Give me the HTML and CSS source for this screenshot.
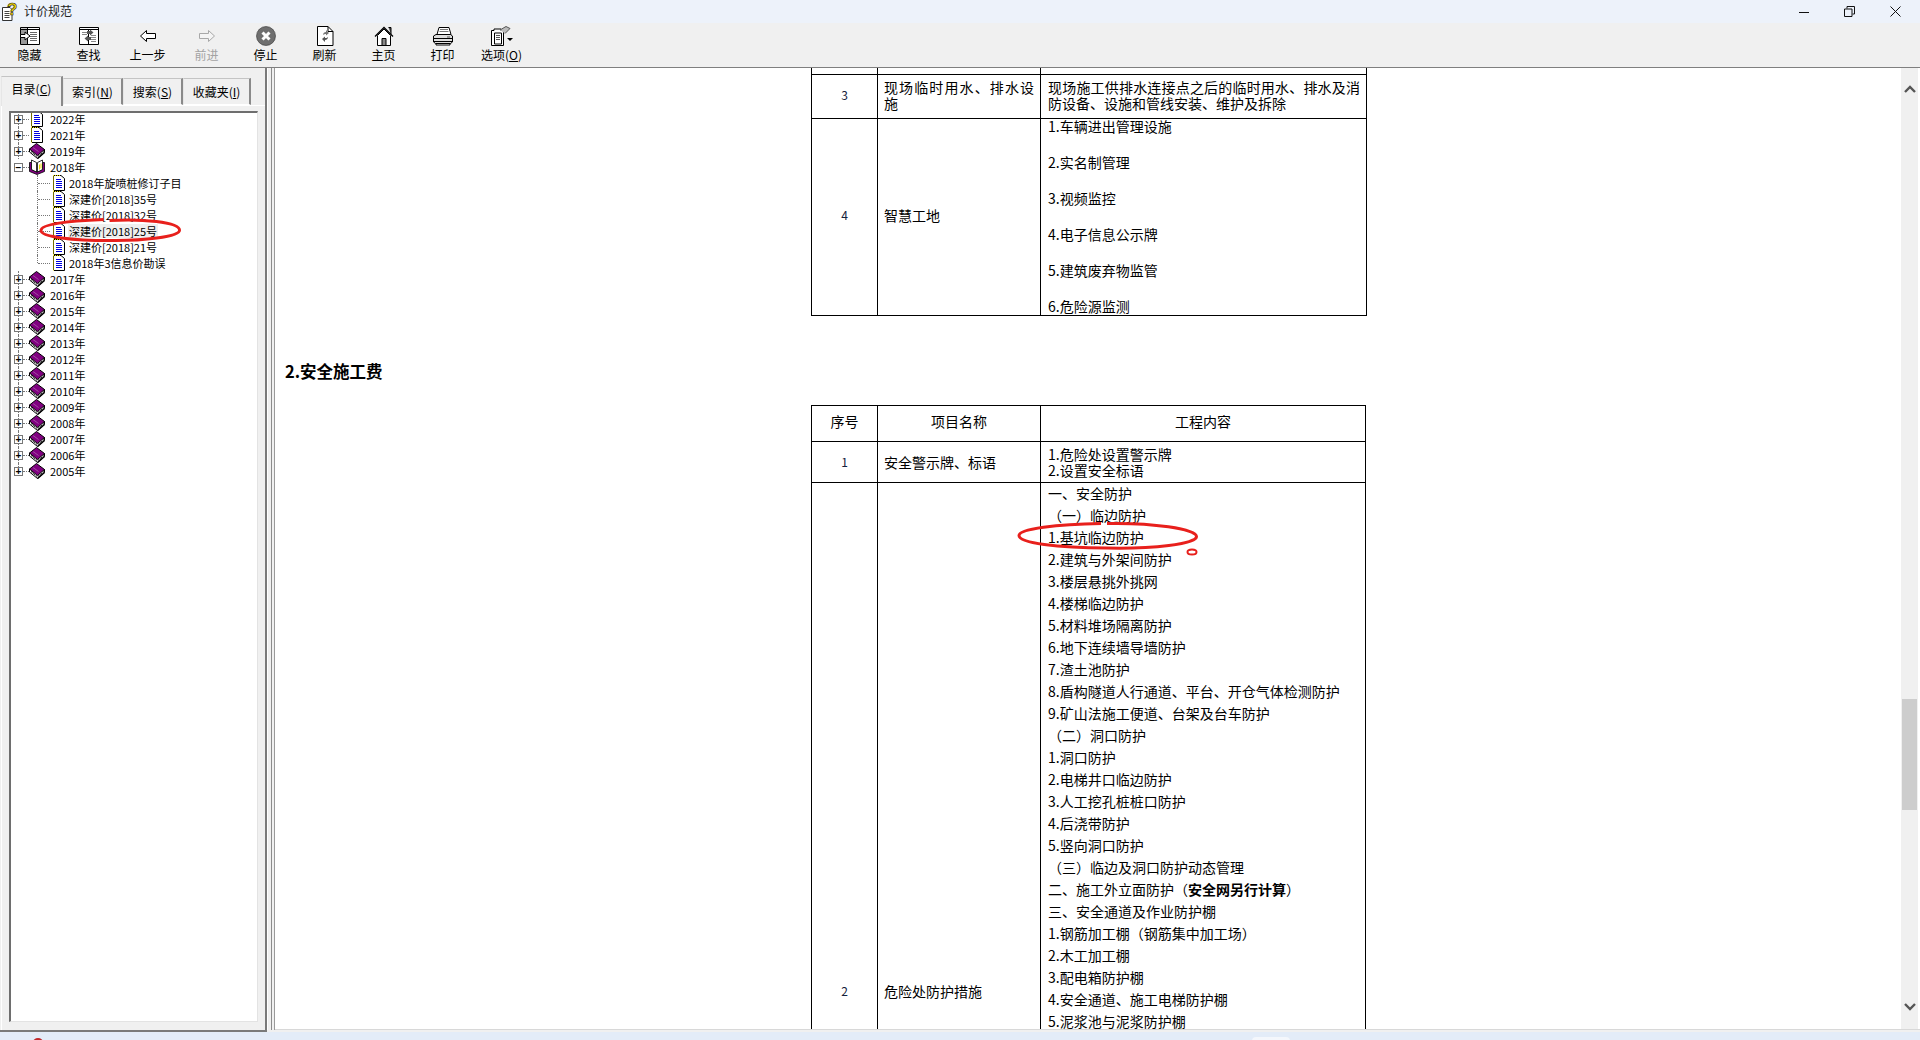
FILE: index.html
```
<!DOCTYPE html>
<html lang="zh-CN">
<head>
<meta charset="utf-8">
<title>计价规范</title>
<link rel="stylesheet" href="styles.css">
</head>
<body>
<svg class="defs" width="0" height="0">
  <symbol id="doc" viewBox="0 0 16 16">
    <path d="M2.500.5H10l3.500 3V15.500H2.500Z" fill="#fff"/>
    <path d="M2.500 15.500V.5H10" fill="none" stroke="#e8d800" stroke-width="1"/>
    <path d="M2.500 1.500V15M3 .5H10" fill="none" stroke="#000" stroke-width="1" stroke-dasharray="1 1"/>
    <path d="M10 .5l3.500 3V15.500H3" fill="none" stroke="#000"/>
    <path d="M5 4.500h5M5 6.500h6M5 8.500h6M5 10.500h6M5 12.500h6" stroke="#0000e0" stroke-width="1"/>
  </symbol>
  <symbol id="book" viewBox="0 0 16 16">
    <path d="M.5 6V9L8.500 15.500 15.500 9.500V6.500Z" fill="#fff" stroke="#000"/>
    <path d="M.5 6 7.500.5l8 6-7 6Z" fill="#800080" stroke="#000"/>
    <path d="M4 4.500 9.500 8.500" stroke="#b070b0" stroke-width=".7" fill="none"/>
    <path d="M2 8.500 8.500 13.800 15 8.500" fill="none" stroke="#000" stroke-width="1" stroke-dasharray="2 1"/>
    <path d="M8.500 15.500 15.500 9.500" stroke="#000" stroke-width="1.500" fill="none"/>
  </symbol>
  <symbol id="bookopen" viewBox="0 0 16 16">
    <path d="M.5 3.500v9l7.500 3 7.500-3v-9h-2v7L8 13 2.500 10.500v-7Z" fill="#800080" stroke="#000" stroke-width=".8"/>
    <path d="M2.500 1 7.500 3.500V13L2.500 10.500Z" fill="#fff" stroke="#000" stroke-width=".8"/>
    <path d="M13.500 1 8.500 3.500V13l5-2.500Z" fill="#fff" stroke="#000" stroke-width=".8"/>
    <path d="M10.500 5.500v5M12 4.500v5" stroke="#e8d800" stroke-width="1"/>
  </symbol>
</svg>

<div class="window">
  <header class="titlebar">
    <svg class="app-icon" width="18" height="19" viewBox="0 0 18 19">
      <path d="M1.500 5.500H9l2 2V18.500H1.500Z" fill="#fff" stroke="#333"/>
      <path d="M3.500 9.500h5M3.500 11.500h5M3.500 13.500h5M3.500 15.500h5" stroke="#444"/>
      <text x="6" y="13" class="app-q">?</text>
    </svg>
    <span class="title-text">计价规范</span>
    <div class="winctl">
      <svg width="10" height="10" viewBox="0 0 10 10"><path d="M0 5.500H10" stroke="#111"/></svg>
      <svg width="11" height="11" viewBox="0 0 11 11"><path d="M.5 3h7.500v7.500H.5ZM3 2.500V.5h7.500V8H8.500" fill="none" stroke="#111"/></svg>
      <svg width="11" height="11" viewBox="0 0 11 11"><path d="M.5.500 10.500 10.500M10.500.500 .5 10.500" fill="none" stroke="#111"/></svg>
    </div>
  </header>

  <nav class="toolbar">
    <div class="tool">
      <svg width="20" height="20" viewBox="0 0 20 20"><path d="M.5 1.500h19v17H.5Z" fill="#fff" stroke="#000"/><path d="M1 2.500h6v15.500H1Z" fill="#999"/><path d="M7.500 1.500V18.500M.5 3.500h19" stroke="#000"/><path d="M10 6.500h7M10 8.500h7M10 10.500h7M10 12.500h7M10 14.500h7" stroke="#666"/><path d="M.5 8.500H5V6l5 4-5 4v-2.500H.5Z" fill="#fff" stroke="#000"/></svg>
      <span class="tool-label">隐藏</span>
    </div>
    <div class="tool">
      <svg width="20" height="20" viewBox="0 0 20 20"><path d="M.5 1.500h19v17H.5Z" fill="#fff" stroke="#000"/><path d="M.5 3.500h19M9.500 4v14" stroke="#000"/><path d="M3 6.500h5M3 8.500h5M12 9.500h5M12 11.500h5M12 13.500h5M12 15.500h5" stroke="#888"/><path d="M8 5h3V3.500l3.500 3-3.500 3V8H8Z" fill="#555"/><path d="M12 11H9V9.500l-3.500 3 3.500 3V14h3Z" fill="#555"/></svg>
      <span class="tool-label">查找</span>
    </div>
    <div class="tool">
      <svg width="20" height="20" viewBox="0 0 20 20"><path d="M2.500 10 8.500 4.500V7.500H17.500V12.500H8.500V15.500Z" fill="#fff" stroke="#000"/></svg>
      <span class="tool-label">上一步</span>
    </div>
    <div class="tool">
      <svg width="20" height="20" viewBox="0 0 20 20"><path d="M17.500 10 11.500 4.500V7.500H2.500V12.500H11.500V15.500Z" fill="#f4f4f4" stroke="#a8a8a8"/></svg>
      <span class="tool-label tool-label-off">前进</span>
    </div>
    <div class="tool">
      <svg width="20" height="20" viewBox="0 0 20 20"><circle cx="10" cy="10" r="9.500" fill="#6f6f6f" stroke="#333" stroke-width=".6"/><path d="M6.500 6.500 13.500 13.500M13.500 6.500 6.500 13.500" stroke="#fff" stroke-width="3"/></svg>
      <span class="tool-label">停止</span>
    </div>
    <div class="tool">
      <svg width="20" height="20" viewBox="0 0 20 20"><path d="M2.500.5H13l5 5V19.500H2.500Z" fill="#fff" stroke="#000"/><path d="M13 .5V5.500H18" fill="none" stroke="#000"/><path d="M8 9c0-2 1.500-3 3-3V4l3 3-3 2.500V8c-1 0-2 0-3 1Z" fill="#777"/><path d="M13 11c0 2-1.500 3-3 3v2l-3-3 3-2.500V12c1 0 2 0 3-1Z" fill="#555"/></svg>
      <span class="tool-label">刷新</span>
    </div>
    <div class="tool">
      <svg width="20" height="20" viewBox="0 0 20 20"><path d="M14.500 1.500h2.500V8" fill="#555" stroke="#000"/><path d="M1 10.500 10 1.500l9 9" fill="none" stroke="#000" stroke-width="1.300"/><path d="M3.500 9.500 10 3l6.500 6.500v10h-13Z" fill="#fff" stroke="#000"/><path d="M8 12.500h4v7H8Z" fill="#888" stroke="#000"/></svg>
      <span class="tool-label">主页</span>
    </div>
    <div class="tool">
      <svg width="20" height="20" viewBox="0 0 20 20"><path d="M6 1.500h10l2 7H4Z" fill="#fff" stroke="#000"/><path d="M7 3.500h8M6.500 5.500h9" stroke="#777"/><path d="M.5 10 3 8.500h14.500l2 1.500v6l-2 1.500H2.500l-2-1.500Z" fill="#ddd" stroke="#000"/><path d="M.5 12.500h19M1 15.500h18" stroke="#000"/><path d="M3 17.500h14v1.500H3Z" fill="#fff" stroke="#000"/><path d="M14 11h3" stroke="#555"/></svg>
      <span class="tool-label">打印</span>
    </div>
    <div class="tool">
      <svg width="22" height="20" viewBox="0 0 22 20"><path d="M.5 4.500h2.500V3h7v1.500h2.500v15H.5Z" fill="#fff" stroke="#000"/><path d="M3.500 7h7v11h-7Z" fill="#fff" stroke="#000"/><path d="M5 9.500h4M5 11.500h4M5 13.500h4" stroke="#555"/><path d="M9 4 15 .5l4 2-5 5" fill="#bbb" stroke="#555"/><path d="M16 12h6l-3 3Z" fill="#000"/></svg>
      <span class="tool-label">选项(<u>O</u>)</span>
    </div>
  </nav>

  <main class="main">
    <aside class="nav">
      <div class="tabs">
        <div class="tab tab-active">目录(<u>C</u>)</div>
        <div class="tab tab-2">索引(<u>N</u>)</div>
        <div class="tab tab-3">搜索(<u>S</u>)</div>
        <div class="tab tab-4">收藏夹(<u>I</u>)</div>
      </div>
      <div class="tab-page">
        <div class="tree">
          <div class="row line"><span class="exp">+</span><i class="dash"></i><svg class="ic"><use href="#doc"/></svg><span class="label">2022年</span></div>
          <div class="row line"><span class="exp">+</span><i class="dash"></i><svg class="ic"><use href="#doc"/></svg><span class="label">2021年</span></div>
          <div class="row line"><span class="exp">+</span><i class="dash"></i><svg class="ic"><use href="#book"/></svg><span class="label">2019年</span></div>
          <div class="row"><span class="exp">−</span><i class="dash"></i><svg class="ic"><use href="#bookopen"/></svg><span class="label">2018年</span></div>
          <div class="row child"><svg class="ic"><use href="#doc"/></svg><span class="label">2018年旋喷桩修订子目</span></div>
          <div class="row child"><svg class="ic"><use href="#doc"/></svg><span class="label">深建价[2018]35号</span></div>
          <div class="row child"><svg class="ic"><use href="#doc"/></svg><span class="label">深建价[2018]32号</span></div>
          <div class="row child"><svg class="ic"><use href="#doc"/></svg><span class="label label-sel">深建价[2018]25号</span></div>
          <div class="row child"><svg class="ic"><use href="#doc"/></svg><span class="label">深建价[2018]21号</span></div>
          <div class="row child child-last"><svg class="ic"><use href="#doc"/></svg><span class="label">2018年3信息价勘误</span></div>
          <div class="row line"><span class="exp">+</span><i class="dash"></i><svg class="ic"><use href="#book"/></svg><span class="label">2017年</span></div>
          <div class="row line"><span class="exp">+</span><i class="dash"></i><svg class="ic"><use href="#book"/></svg><span class="label">2016年</span></div>
          <div class="row line"><span class="exp">+</span><i class="dash"></i><svg class="ic"><use href="#book"/></svg><span class="label">2015年</span></div>
          <div class="row line"><span class="exp">+</span><i class="dash"></i><svg class="ic"><use href="#book"/></svg><span class="label">2014年</span></div>
          <div class="row line"><span class="exp">+</span><i class="dash"></i><svg class="ic"><use href="#book"/></svg><span class="label">2013年</span></div>
          <div class="row line"><span class="exp">+</span><i class="dash"></i><svg class="ic"><use href="#book"/></svg><span class="label">2012年</span></div>
          <div class="row line"><span class="exp">+</span><i class="dash"></i><svg class="ic"><use href="#book"/></svg><span class="label">2011年</span></div>
          <div class="row line"><span class="exp">+</span><i class="dash"></i><svg class="ic"><use href="#book"/></svg><span class="label">2010年</span></div>
          <div class="row line"><span class="exp">+</span><i class="dash"></i><svg class="ic"><use href="#book"/></svg><span class="label">2009年</span></div>
          <div class="row line"><span class="exp">+</span><i class="dash"></i><svg class="ic"><use href="#book"/></svg><span class="label">2008年</span></div>
          <div class="row line"><span class="exp">+</span><i class="dash"></i><svg class="ic"><use href="#book"/></svg><span class="label">2007年</span></div>
          <div class="row line"><span class="exp">+</span><i class="dash"></i><svg class="ic"><use href="#book"/></svg><span class="label">2006年</span></div>
          <div class="row row-last"><span class="exp">+</span><i class="dash"></i><svg class="ic"><use href="#book"/></svg><span class="label">2005年</span></div>
        </div>
      </div>
    </aside>

    <div class="splitter"></div>

    <section class="content">
      <div class="doc">
        <table class="grid grid-a">
          <colgroup><col class="c1"><col class="c2"><col class="c3"></colgroup>
          <tr class="r-clip"><td></td><td></td><td></td></tr>
          <tr class="r-3">
            <td class="num up1">3</td>
            <td class="tight">现场临时用水、排水设施</td>
            <td class="tight">现场施工供排水连接点之后的临时用水、排水及消防设备、设施和管线安装、维护及拆除</td>
          </tr>
          <tr>
            <td class="num up2">4</td>
            <td class="up2">智慧工地</td>
            <td class="spaced">
              <p>1.车辆进出管理设施</p>
              <p>2.实名制管理</p>
              <p>3.视频监控</p>
              <p>4.电子信息公示牌</p>
              <p>5.建筑废弃物监管</p>
              <p>6.危险源监测</p>
            </td>
          </tr>
        </table>

        <h2 class="heading">2.安全施工费</h2>

        <table class="grid grid-b">
          <colgroup><col class="c1"><col class="c2"><col class="c3b"></colgroup>
          <tr class="r-head"><th>序号</th><th>项目名称</th><th>工程内容</th></tr>
          <tr class="r-1">
            <td class="num">1</td>
            <td>安全警示牌、标语</td>
            <td class="text">1.危险处设置警示牌<br>2.设置安全标语</td>
          </tr>
          <tr class="r-long">
            <td class="num">2</td>
            <td>危险处防护措施</td>
            <td class="lines">
              <p>一、安全防护</p>
              <p>（一）临边防护</p>
              <p>1.基坑临边防护</p>
              <p>2.建筑与外架间防护</p>
              <p>3.楼层悬挑外挑网</p>
              <p>4.楼梯临边防护</p>
              <p>5.材料堆场隔离防护</p>
              <p>6.地下连续墙导墙防护</p>
              <p>7.渣土池防护</p>
              <p>8.盾构隧道人行通道、平台、开仓气体检测防护</p>
              <p>9.矿山法施工便道、台架及台车防护</p>
              <p>（二）洞口防护</p>
              <p>1.洞口防护</p>
              <p>2.电梯井口临边防护</p>
              <p>3.人工挖孔桩桩口防护</p>
              <p>4.后浇带防护</p>
              <p>5.竖向洞口防护</p>
              <p>（三）临边及洞口防护动态管理</p>
              <p>二、施工外立面防护（<b>安全网另行计算</b>）</p>
              <p>三、安全通道及作业防护棚</p>
              <p>1.钢筋加工棚（钢筋集中加工场）</p>
              <p>2.木工加工棚</p>
              <p>3.配电箱防护棚</p>
              <p>4.安全通道、施工电梯防护棚</p>
              <p>5.泥浆池与泥浆防护棚</p>
            </td>
          </tr>
        </table>
      </div>

      <div class="vscroll">
        <svg width="16" height="10" viewBox="0 0 16 10"><path d="M3 8 8 3l5 5" fill="none" stroke="#555" stroke-width="2.400"/></svg>
        <div class="thumb"></div>
        <svg width="16" height="10" viewBox="0 0 16 10"><path d="M3 2l5 5 5-5" fill="none" stroke="#555" stroke-width="2.400"/></svg>
      </div>
    </section>
  </main>

  <footer class="strip"><i class="blip"></i><i class="pill"></i></footer>

  <svg class="mark mark-tree" width="143" height="26" viewBox="0 0 146 26" preserveAspectRatio="none"><path d="M72 3.500C105 1.500 143 5 143.500 13 144 20 105 24 72 23.500 35 23.500 2 20 2 13.500 2 7 30 4 66 2.500" fill="none" stroke="#e8201c" stroke-width="3"/></svg>
  <svg class="mark mark-doc" width="182" height="30" viewBox="0 0 182 30"><path d="M90 2.500C135 1.500 179 8 179.500 15.500 180 23 135 28 90 27 40 27 2 22 2 14.500 2 8 40 3 84 2.500" fill="none" stroke="#e8201c" stroke-width="3"/></svg>
  <svg class="mark mark-dot" width="12" height="8" viewBox="0 0 12 8"><ellipse cx="6" cy="4" rx="4.500" ry="2.500" fill="none" stroke="#e8201c" stroke-width="2"/></svg>
</div>
</body>
</html>
```

FILE: styles.css
```
* { box-sizing: border-box; }
html, body { margin: 0; padding: 0; }
body {
  font-family: "Noto Sans CJK SC", "Liberation Sans", sans-serif;
  color: #000;
  overflow: hidden;
}
.defs { position: absolute; }
u { text-decoration: underline; }

.window {
  position: relative;
  width: 1920px;
  height: 1040px;
  display: flex;
  flex-direction: column;
  background: #f0f0f0;
  overflow: hidden;
}

/* title bar */
.titlebar {
  height: 23px;
  flex: none;
  display: flex;
  align-items: center;
  background: #edf2fa;
  padding-left: 1px;
}
.app-icon { flex: none; }
.app-q {
  font-size: 17px;
  font-weight: 700;
  fill: #f4d800;
  stroke: #222;
  stroke-width: .6px;
  font-family: "Liberation Sans", sans-serif;
}
.title-text {
  margin: -1px 0 0 5px;
  font-size: 12px;
  line-height: 16px;
  color: #222;
}
.winctl {
  margin-left: auto;
  display: flex;
  align-items: center;
  padding-right: 19px;
  gap: 35px;
}
.winctl svg { display: block; }

/* toolbar */
.toolbar {
  height: 45px;
  flex: none;
  display: flex;
  background: #f0f0f0;
  border-bottom: 1px solid #7f7f7f;
}
.tool {
  width: 59px;
  display: flex;
  flex-direction: column;
  align-items: center;
  padding-top: 3px;
}
.tool svg { display: block; flex: none; }
.tool-label {
  font-size: 12px;
  line-height: 16px;
  margin-top: 1px;
  white-space: nowrap;
}
.tool-label-off { color: #a3a3a3; }

/* main split */
.main {
  flex: 1;
  min-height: 0;
  display: flex;
}

.nav {
  width: 267px;
  flex: none;
  display: flex;
  flex-direction: column;
  padding-top: 8px;
  padding-left: 1px;
  border-right: 2px solid #7a7a7a;
  border-bottom: 2px solid #7a7a7a;
  background: #f0f0f0;
}
.tabs {
  height: 29px;
  flex: none;
  display: flex;
  align-items: flex-end;
  position: relative;
  z-index: 1;
}
.tab {
  height: 27px;
  font-size: 12px;
  line-height: 26px;
  text-align: center;
  white-space: nowrap;
  background: #f0f0f0;
  border-top: 1px solid #c4c4c4;
  border-left: 1px solid #e6e6e6;
  border-right: 2px solid #8a8a8a;
  border-bottom: 1px solid #fff;
}
.tab-active {
  width: 62px;
  height: 30px;
  line-height: 24px;
  border-bottom: 0;
  margin-bottom: -1px;
}
.tab-2 { width: 60px; }
.tab-3 { width: 60px; }
.tab-4 { width: 68px; }
.tab-page {
  flex: 1;
  min-height: 0;
  padding: 5px 7px 8px 7px;
  border-top: 1px solid #fff;
  border-left: 1px solid #fff;
}
.tree {
  height: 100%;
  background: #fff;
  border-left: 2px solid #6e6e6e;
  border-top: 2px solid #6e6e6e;
  border-right: 1px solid #e3e3e3;
  border-bottom: 1px solid #e3e3e3;
  overflow: hidden;
}
.row {
  position: relative;
  height: 16px;
  display: flex;
  align-items: center;
  padding-left: 3px;
}
.row:first-child { margin-top: -2px; }
.row.line::before {
  content: "";
  position: absolute;
  left: 7px;
  top: 0;
  height: 16px;
  border-left: 1px dotted #777;
}
.row-last::before {
  content: "";
  position: absolute;
  left: 7px;
  top: 0;
  height: 8px;
  border-left: 1px dotted #777;
}
.exp {
  position: relative;
  z-index: 1;
  width: 9px;
  height: 9px;
  flex: none;
  border: 1px solid #777;
  background: #fff;
  font-size: 10px;
  line-height: 7px;
  text-align: center;
  font-family: "Liberation Sans", sans-serif;
  font-weight: 700;
  overflow: hidden;
}
.dash {
  width: 6px;
  height: 0;
  flex: none;
  border-top: 1px dotted #777;
}
.ic { width: 16px; height: 16px; flex: none; display: block; }
.label {
  margin-left: 5px;
  font-size: 11px;
  line-height: 14px;
  white-space: nowrap;
  color: #000;
}
.row.child { padding-left: 40px; }
.row.child .label { margin-left: 1px; padding: 0 1px; }
/* vertical guide */
.row.child::after {
  content: "";
  position: absolute;
  left: 26px;
  top: 0;
  height: 16px;
  border-left: 1px dotted #777;
}
.row.child-last::after { height: 8px; }
/* horizontal stub */
.row.child::before {
  content: "";
  position: absolute;
  left: 27px;
  top: 8px;
  width: 12px;
  border-top: 1px dotted #777;
}
.label-sel { background: #efefef; }

.splitter {
  width: 8px;
  flex: none;
  border-left: 1px solid #fff;
  border-right: 1px solid #9a9a9a;
  background: linear-gradient(90deg, #f0f0f0 3px, #8c8c8c 3px, #8c8c8c 4px, #f0f0f0 4px);
  margin-bottom: 2px;
}

/* content */
.content {
  flex: 1;
  min-width: 0;
  margin-bottom: 2px;
  display: flex;
  background: #fff;
  border-bottom: 1px solid #d8d8d8;
  overflow: hidden;
}
.doc {
  flex: 1;
  min-width: 0;
  overflow: hidden;
  padding-left: 10px;
}
.grid {
  margin: -1px 0 0 526px;
  border-collapse: collapse;
  table-layout: fixed;
  font-size: 14px;
  line-height: 16.500px;
}
.grid-a { width: 555px; }
.grid-b { width: 554px; margin-top: 0; }
.c1 { width: 66px; }
.c2 { width: 163px; }
.c3 { width: 326px; }
.c3b { width: 325px; }
.grid td, .grid th {
  border: 1px solid #000;
  padding: 0 6px;
  font-weight: 400;
  vertical-align: middle;
}
.grid td:last-child { padding-left: 7px; }
.grid th { text-align: center; font-size: 14px; padding-bottom: 4px; }
.num { text-align: center; font-size: 12px; color: #14213d; }
.r-clip { height: 7px; }
.r-3 { height: 44px; }
.r-head { height: 36px; }
.r-1 { height: 41px; }
.r-long { height: 1018px; }
.grid td.tight { line-height: 16px; padding-bottom: 4px; text-align: justify; }
.grid td.up1 { padding-bottom: 3px; }
.grid td.up2 { padding-bottom: 4px; }
.spaced { line-height: 18px; }
.spaced p { margin: 0 0 18px; }
.spaced p:first-child { margin-top: -2px; }
.spaced p:last-child { margin-bottom: 0; }
.lines {
  vertical-align: top !important;
  line-height: 22px;
}
.lines p { margin: 0; white-space: nowrap; }
.lines p:first-child { margin-top: -1px; }
.heading {
  margin: 43px 0 22px;
  font-size: 16.500px;
  line-height: 24px;
  font-weight: 700;
}

/* scrollbar */
.vscroll {
  width: 17px;
  flex: none;
  margin-right: 2px;
  position: relative;
  background: #f0f0f0;
  display: flex;
  flex-direction: column;
  align-items: center;
  justify-content: space-between;
  padding: 16px 0 17px;
}
.vscroll svg { display: block; }
.thumb {
  position: absolute;
  left: 1px;
  top: 631px;
  width: 15px;
  height: 111px;
  background: #cdcdcd;
}

/* bottom strip */
.strip {
  height: 8px;
  flex: none;
  position: relative;
  background: #e3ecf8;
  overflow: hidden;
}
.blip {
  position: absolute;
  left: 33px;
  top: 6px;
  width: 10px;
  height: 8px;
  border-radius: 50%;
  background: #c0282a;
}
.pill {
  position: absolute;
  left: 1252px;
  top: 5px;
  width: 38px;
  height: 10px;
  border-radius: 4px;
  background: #f4f7fc;
}

/* hand-drawn annotations */
.mark { position: absolute; }
.mark-tree { left: 39px; top: 217px; }
.mark-doc { left: 1017px; top: 521px; }
.mark-dot { left: 1186px; top: 548px; }
```
